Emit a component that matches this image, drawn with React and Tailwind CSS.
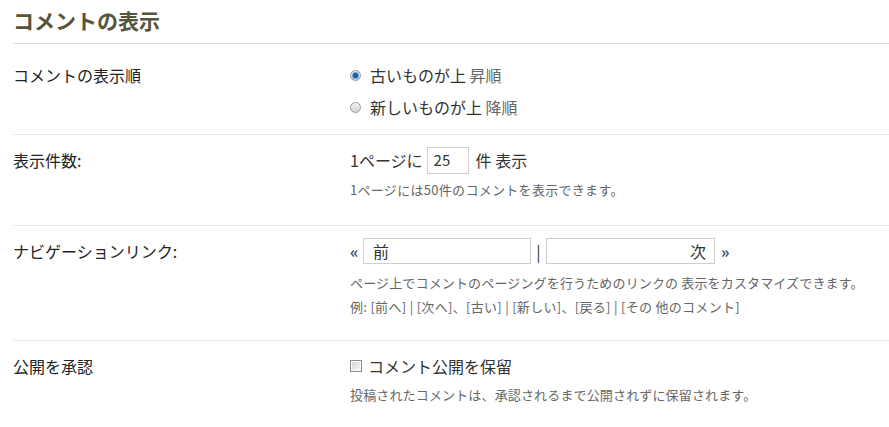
import React from "react";

const font = { fontFamily: '"Noto Sans CJK JP", "Noto Sans", sans-serif' };

function Radio({ checked }) {
  return (
    <span className="relative inline-flex w-[11px] h-[11px] rounded-full border border-[#9a9a9a] bg-gradient-to-b from-[#f4f4f4] to-[#d4d4d4] items-center justify-center mr-[9px] shrink-0">
      {checked && (
        <span className="w-[5px] h-[5px] rounded-full bg-[#1d5f9c] shadow-[0_0_1px_1px_#5b9bd8]" />
      )}
    </span>
  );
}

function Checkbox() {
  return (
    <span className="inline-flex w-[12px] h-[12px] border border-[#8a8a8a] bg-white items-center justify-center mr-[6px] shrink-0">
      <span className="w-[8px] h-[8px] bg-gradient-to-br from-[#d8d8d8] to-[#f4f4f4]" />
    </span>
  );
}

function Row({ label, children, pb, last }) {
  return (
    <div className={`flex pt-[11px] ${last ? "" : "border-b border-[#e6e6e6]"}`} style={{ paddingBottom: pb }}>
      <div className="w-[337px] shrink-0 leading-[28px] text-[16px] text-[#222]">{label}</div>
      <div className="flex-1 text-[16px] text-[#333]">{children}</div>
    </div>
  );
}

export default function App() {
  return (
    <div className="bg-white w-[889px] h-[427px] overflow-hidden pl-[13px]" style={font}>
      <div className="h-[44px] border-b border-[#dcdcdc] flex items-center">
        <h2 className="text-[21px] font-bold text-[#56543a] leading-none -mt-[3px]">コメントの表示</h2>
      </div>
      <div className="mt-[6px]">
        <Row label="コメントの表示順" pb="13px">
          <div className="h-[28px] flex items-center">
            <Radio checked />
            <span>古いものが上 <span className="text-[#666]">昇順</span></span>
          </div>
          <div className="h-[28px] flex items-center mt-[4px]">
            <Radio />
            <span>新しいものが上 <span className="text-[#666]">降順</span></span>
          </div>
        </Row>
        <Row label="表示件数:" pb="26px">
          <div className="h-[28px] flex items-center">
            <span>1ページに</span>
            <span className="ml-[4px] mr-[7px] w-[42px] h-[27px] border border-[#cfcfcf] bg-white flex items-center pl-[6px] text-[15px] text-[#333]">25</span>
            <span>件 表示</span>
          </div>
          <div className="mt-[7px] text-[13px] leading-[18px] text-[#666] tracking-[0.3px]">1ページには50件のコメントを表示できます。</div>
        </Row>
        <Row label="ナビゲーションリンク:" pb="24px">
          <div className="h-[28px] flex items-center">
            <span className="font-bold text-[#3a4a6a] w-[13px]">«</span>
            <span className="w-[168px] h-[26px] border border-[#cfcfcf] bg-white flex items-center pl-[9px]">前</span>
            <span className="w-[15px] text-center">|</span>
            <span className="w-[169px] h-[26px] border border-[#cfcfcf] bg-white flex items-center justify-end pr-[8px]">次</span>
            <span className="font-bold text-[#3a4a6a] ml-[6px]">»</span>
          </div>
          <div className="mt-[9px] text-[13px] leading-[18px] text-[#666] tracking-[0.15px]">ページ上でコメントのページングを行うためのリンクの 表示をカスタマイズできます。</div>
          <div className="mt-[6px] text-[13px] leading-[18px] text-[#666] tracking-[0.3px]">例: [前へ] | [次へ]、[古い] | [新しい]、[戻る] | [その 他のコメント]</div>
        </Row>
        <Row label="公開を承認" pb="20px" last>
          <div className="h-[28px] flex items-center">
            <Checkbox />
            <span>コメント公開を保留</span>
          </div>
          <div className="mt-[6px] text-[13px] leading-[18px] text-[#666] tracking-[0.15px]">投稿されたコメントは、承認されるまで公開されずに保留されます。</div>
        </Row>
      </div>
    </div>
  );
}
